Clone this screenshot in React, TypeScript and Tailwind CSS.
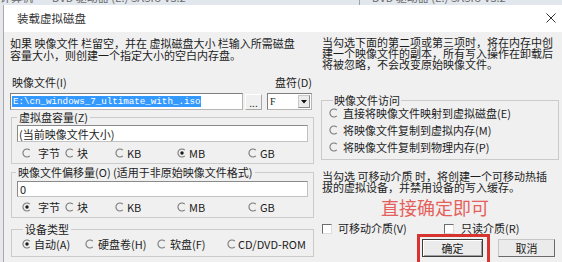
import React from 'react';

function Radio({ checked = false }: { checked?: boolean }) {
  return (
    <svg width="10" height="10" viewBox="0 0 10 10" className="shrink-0">
      <path d="M7.8 2.2 A4 4 0 1 0 7.8 7.8" fill="none" stroke="#7a7a7a" strokeWidth="1.1" />
      {checked && <circle cx="5" cy="5" r="1.7" fill="#1a1a1a" />}
    </svg>
  );
}

function Check() {
  return (
    <span className="block w-[10px] h-[10px] shrink-0 bg-white border border-[#dcdcdc] border-t-[#6d6d6d] border-l-[#6d6d6d]" />
  );
}

interface Opt {
  label: string;
  w: string;
  gap: string;
  checked?: boolean;
}

function RadioRow({ items, className }: { items: Opt[]; className: string }) {
  return (
    <div className={`flex items-center h-[12px] leading-[12px] ${className}`}>
      {items.map((it) => (
        <div key={it.label} className={`flex items-center shrink-0 ${it.w} ${it.gap}`}>
          <Radio checked={it.checked} />
          <span className="whitespace-nowrap">{it.label}</span>
        </div>
      ))}
    </div>
  );
}

const sizeUnits = (first: boolean): Opt[] => [
  { label: '字节', w: 'w-[43px]', gap: 'gap-[6px]', checked: first },
  { label: '块', w: 'w-[50px]', gap: 'gap-[2px]' },
  { label: 'KB', w: 'w-[62px]', gap: 'gap-[2px]' },
  { label: 'MB', w: 'w-[71px]', gap: 'gap-[2px]', checked: !first },
  { label: 'GB', w: 'w-[40px]', gap: 'gap-[2px]' },
];

const deviceTypes: Opt[] = [
  { label: '自动(A)', w: 'w-[63px]', gap: 'gap-[2px]', checked: true },
  { label: '硬盘卷(H)', w: 'w-[72px]', gap: 'gap-[3px]' },
  { label: '软盘(F)', w: 'w-[70px]', gap: 'gap-[3px]' },
  { label: 'CD/DVD-ROM', w: 'w-[80px]', gap: 'gap-[1px]' },
];

const accessModes = [
  '直接将映像文件映射到虚拟磁盘(E)',
  '将映像文件复制到虚拟内存(M)',
  '将映像文件复制到物理内存(P)',
];

export default function App() {
  return (
    <div className="w-[562px] h-[262px] overflow-hidden bg-[#f0f0f0] text-[11px] text-[#1c1c1c] font-['Noto_Sans_CJK_SC',sans-serif]">
      {/* window behind, only its bottom edge shows */}
      <div className="h-[5px] overflow-hidden bg-[#e2e7ed] flex text-[#6a6a6a] leading-[12px] whitespace-nowrap">
        <div className="-mt-[9px] flex">
          <span className="w-[52px]">计算机</span>
          <span className="w-[307px]">DVD 驱动器 (E:) SASIU V3.2</span>
          <span className="border-l border-[#9aa3ad] pl-[12px]">DVD 驱动器 (E:) SASIU V3.2</span>
        </div>
      </div>

      <div className="flex h-[257px]">
        <div className="w-[4px] bg-[#e6e8eb] border-r border-[#a9a9a9]" />

        <div className="flex-1 flex flex-col">
          <div className="h-[27px] shrink-0 bg-white flex items-center justify-between pl-[13px] pr-[6px]">
            <span className="text-[11.5px] text-[#333]">装载虚拟磁盘</span>
            <svg width="10" height="10" viewBox="0 0 10 10" className="-mt-[1px]">
              <path d="M0.5 0.5 L9.5 9.5 M9.5 0.5 L0.5 9.5" stroke="#333" strokeWidth="1" />
            </svg>
          </div>

          <div className="flex flex-1 pl-[6px]">
            {/* left column */}
            <div className="w-[311px] shrink-0 flex flex-col">
              <p className="mt-[5px] leading-[12px] whitespace-nowrap">
                如果 映像文件 栏留空，并在 虚拟磁盘大小 栏输入所需磁盘
                <br />
                容量大小，则创建一个指定大小的空白内存盘。
              </p>

              <div className="mt-[15px] flex leading-[12px] w-[302px]">
                <span className="ml-[2px]">映像文件(I)</span>
                <span className="ml-auto">盘符(D)</span>
              </div>

              <div className="mt-[5px] h-[17px] flex items-center">
                <div className="w-[233px] h-[17px] bg-white border border-[#b5b5b5] border-t-[#7f7f7f] border-l-[#7f7f7f] flex items-center pl-[1px]">
                  <span className="bg-[#3399ff] text-white font-['Liberation_Mono',monospace] text-[9.2px] leading-[11px] px-[1px]">
                    E:\cn_windows_7_ultimate_with_.iso
                  </span>
                </div>
                <div className="ml-[2px] w-[17px] h-[16px] bg-[#f0f0f0] border border-[#a8a8a8] border-t-white border-l-white flex items-end justify-center leading-[10px] text-[10px] pb-[1px]">
                  ...
                </div>
                <div className="ml-[5px] w-[45px] h-[17px] bg-white border border-[#b5b5b5] border-t-[#7f7f7f] border-l-[#7f7f7f] flex items-center">
                  <span className="pl-[2px] font-['Liberation_Serif',serif] text-[10px]">F</span>
                  <span className="ml-auto mr-[1px] w-[12px] h-[13px] bg-[#ececec] border border-[#c8c8c8] border-r-[#8a8a8a] border-b-[#8a8a8a] flex items-center justify-center">
                    <svg width="6" height="4" viewBox="0 0 6 4">
                      <path d="M0 0 H6 L3 3.5 Z" fill="#111" />
                    </svg>
                  </span>
                </div>
              </div>

              <fieldset className="mt-[1px] ml-[1px] w-[303px] border border-[#cbcbcb] pb-[4px]">
                <legend className="ml-[5px] px-[2px] leading-[12px]">虚拟盘容量(Z)</legend>
                <div className="mt-[2px] mx-[5px] h-[17px] bg-white border border-[#c2c2c2] border-t-[#8a8a8a] border-l-[#8a8a8a] flex items-center pl-[1px] leading-[12px]">
                  (当前映像文件大小)
                </div>
                <RadioRow items={sizeUnits(false)} className="mt-[5px] pl-[10px]" />
              </fieldset>

              <fieldset className="mt-[2px] ml-[1px] w-[303px] border border-[#cbcbcb] pb-[4px]">
                <legend className="ml-[4px] px-[2px] leading-[12px] whitespace-nowrap">
                  映像文件偏移量(O) (适用于非原始映像文件格式)
                </legend>
                <div className="mt-[3px] mx-[5px] h-[16px] bg-white border border-[#c2c2c2] border-t-[#8a8a8a] border-l-[#8a8a8a] flex items-center pl-[2px] leading-[12px]">
                  0
                </div>
                <RadioRow items={sizeUnits(true)} className="mt-[4px] pl-[10px]" />
              </fieldset>

              <fieldset className="mt-[5px] ml-[1px] w-[303px] border border-[#cbcbcb] pb-[6px]">
                <legend className="ml-[11px] px-[2px] leading-[12px]">设备类型</legend>
                <RadioRow items={deviceTypes} className="mt-[3px] pl-[10px]" />
              </fieldset>
            </div>

            {/* right column */}
            <div className="w-[238px] shrink-0 flex flex-col">
              <p className="mt-[5px] ml-[1px] leading-[11px] whitespace-nowrap">
                当勾选下面的第二项或第三项时，将在内存中创
                <br />
                建一个映像文件的副本，所有写入操作在卸载后
                <br />
                将被忽略，不会改变原始映像文件。
              </p>

              <fieldset className="mt-[24px] w-[238px] border border-[#cbcbcb] pb-[6px]">
                <legend className="ml-[11px] px-[1px] leading-[12px]">映像文件访问</legend>
                <div className="mt-[1px] flex flex-col gap-[5px] pl-[7px]">
                  {accessModes.map((m) => (
                    <div key={m} className="flex items-center gap-[4px] h-[12px] leading-[12px] whitespace-nowrap">
                      <Radio />
                      <span>{m}</span>
                    </div>
                  ))}
                </div>
              </fieldset>

              <p className="mt-[11px] ml-[1px] leading-[11px] whitespace-nowrap">
                当勾选 可移动介质 时，将创建一个可移动热插
                <br />
                拔的虚拟设备，并禁用设备的写入缓存。
              </p>

              <div className="mt-[5px] pl-[60px] text-[18px] leading-[18px] text-[#e5605b] whitespace-nowrap">
                直接确定即可
              </div>

              <div className="mt-[7px] h-[11px] flex items-center leading-[11px] whitespace-nowrap">
                <div className="ml-[1px] w-[122px] flex items-center gap-[6px]">
                  <Check />
                  <span>可移动介质(V)</span>
                </div>
                <div className="flex items-center gap-[7px]">
                  <Check />
                  <span>只读介质(R)</span>
                </div>
              </div>

              <div className="flex items-start">
                <div className="ml-[96px] border-[3px] border-[#d8342f] pt-[2px] pl-[2px] pr-[4px] pb-[8px]">
                  <button className="block w-[61px] h-[18px] bg-[#ebebeb] border border-[#3c3c3c] shadow-[inset_1px_1px_0_#fff,inset_-1px_-1px_0_#a0a0a0] text-[11px] leading-[14px]">
                    确定
                  </button>
                </div>
                <button className="ml-[8px] mt-[5px] w-[57px] h-[18px] bg-[#ebebeb] border border-[#c6c6c6] border-r-[#6a6a6a] border-b-[#6a6a6a] text-[11px] leading-[14px]">
                  取消
                </button>
              </div>
            </div>
          </div>
        </div>
      </div>
    </div>
  );
}
